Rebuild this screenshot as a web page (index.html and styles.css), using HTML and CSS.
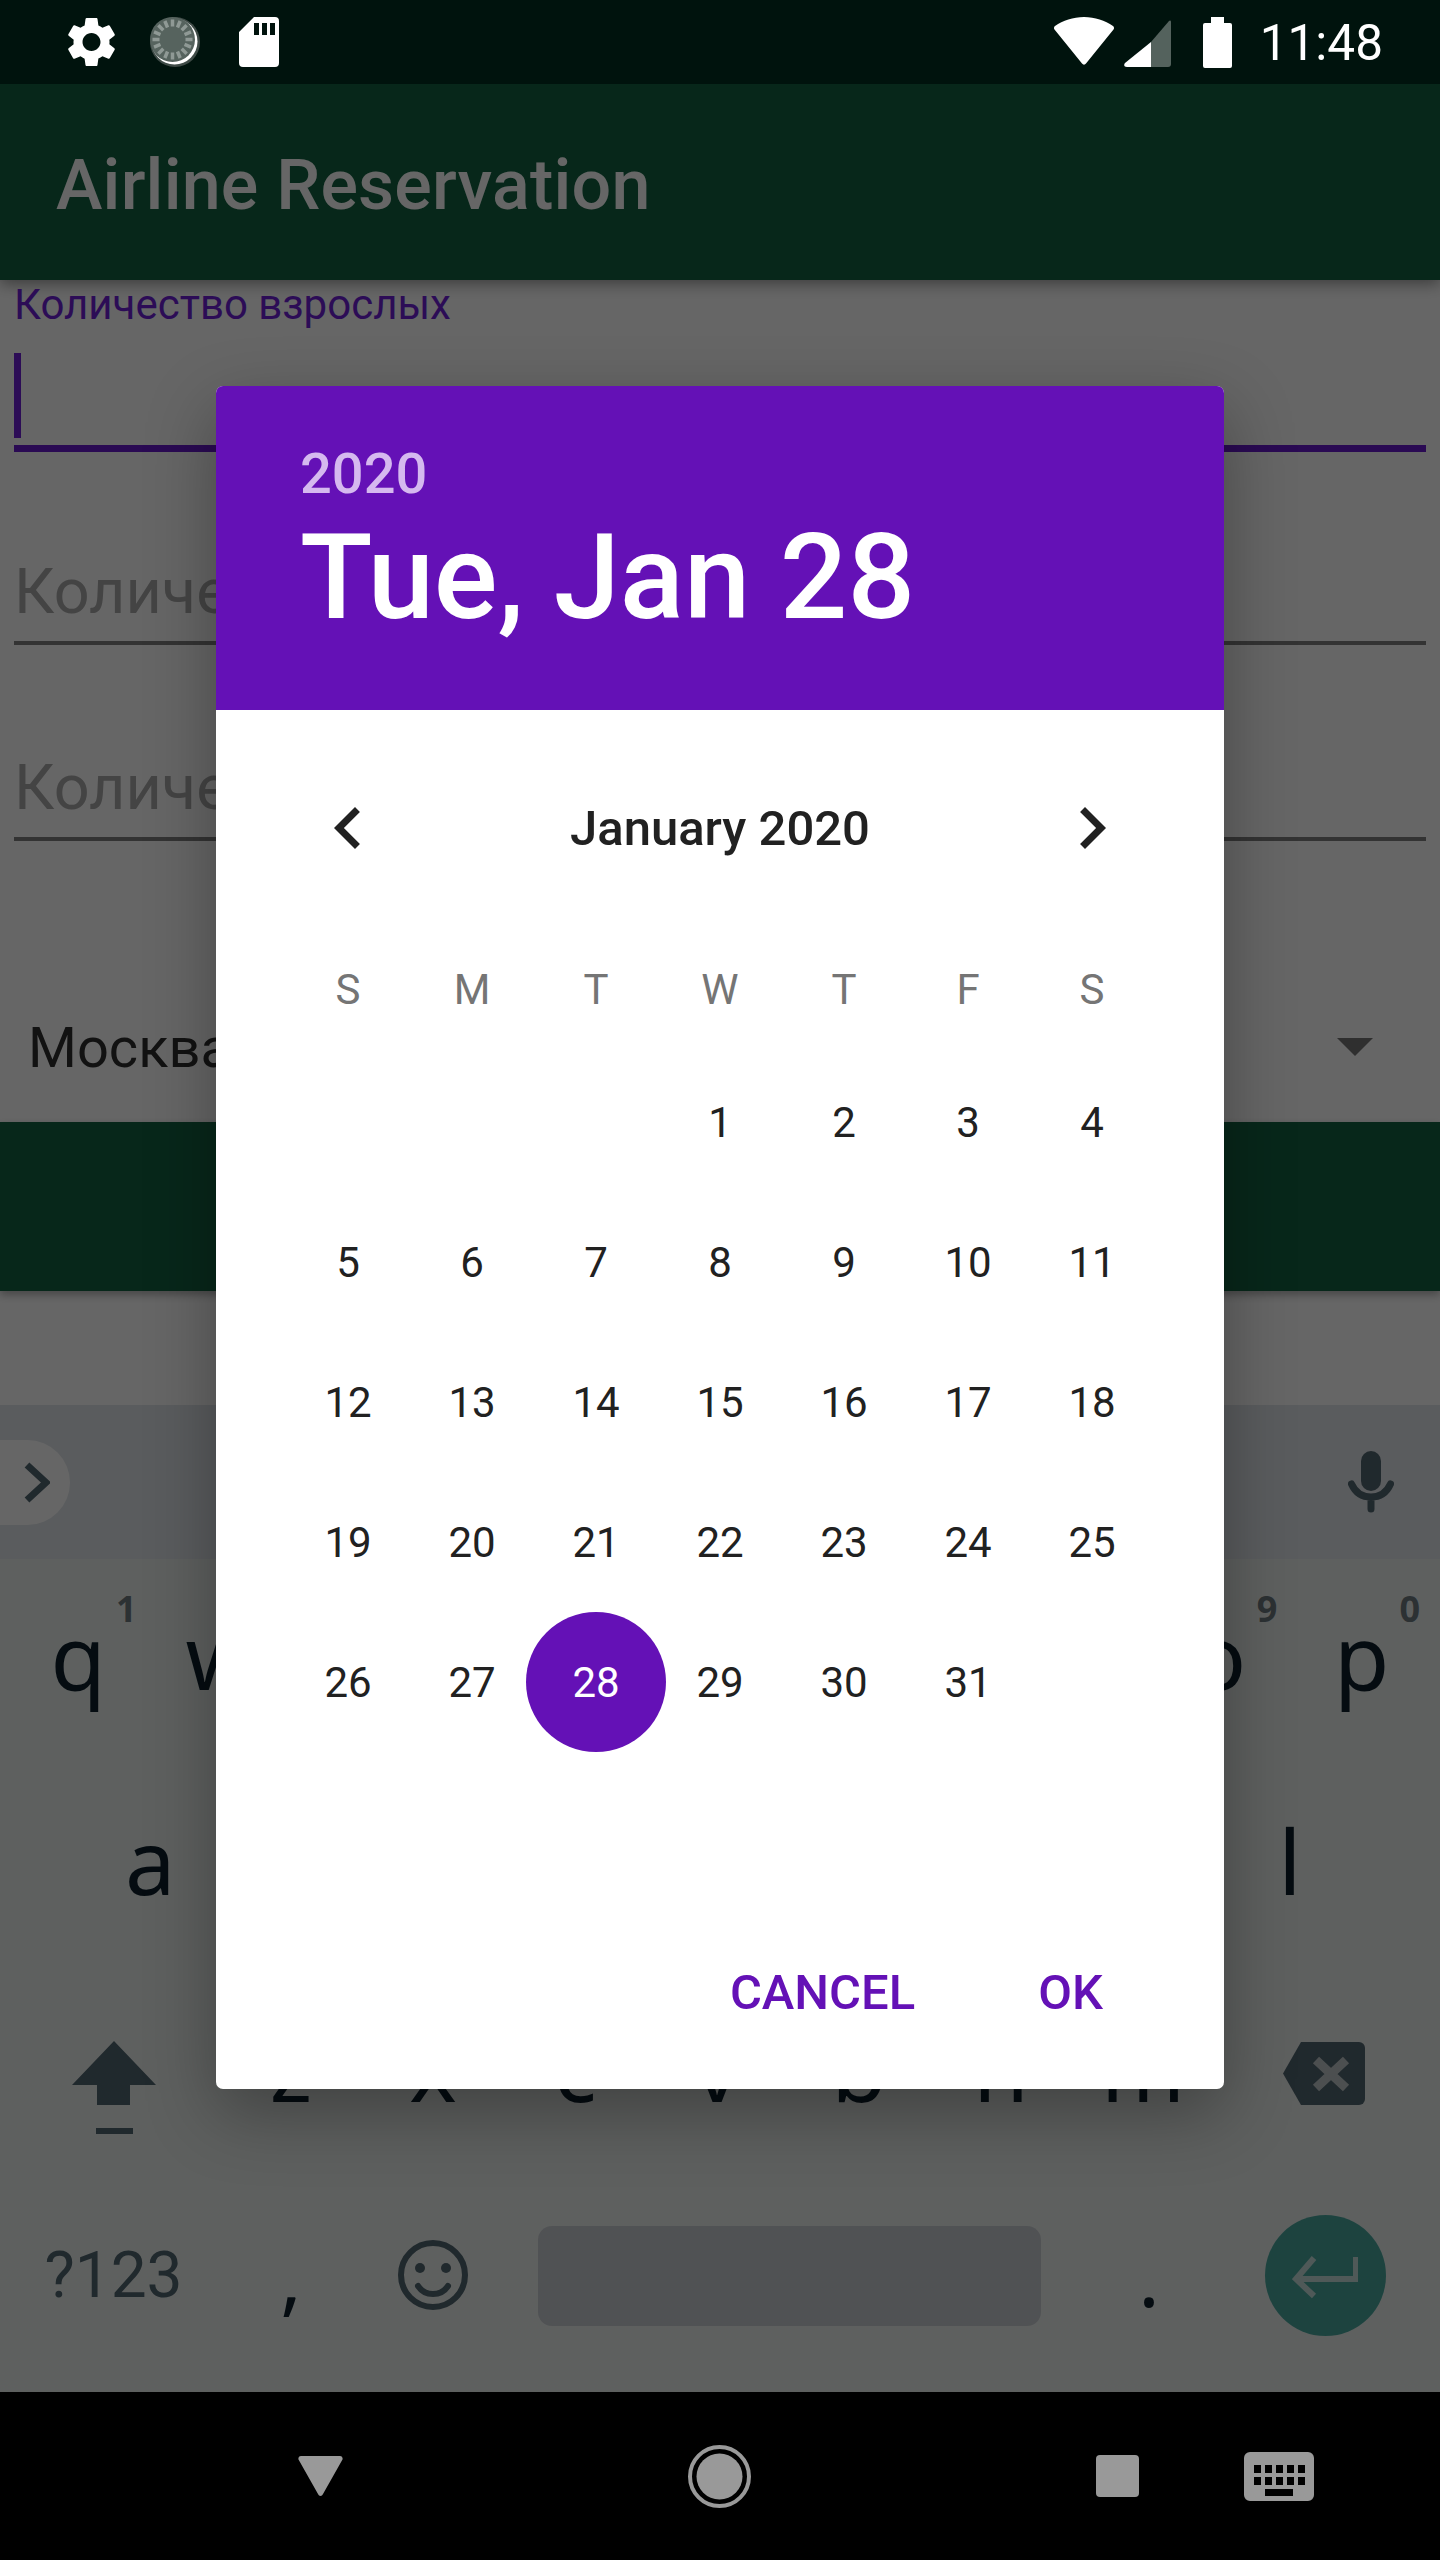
FILE: index.html
```html
<!DOCTYPE html>
<html lang="en">
<head>
    <meta charset="UTF-8">
    <meta name="viewport" content="width=device-width, initial-scale=1.0">
    <title>Airline Reservation</title>
    <link rel="stylesheet" href="styles.css">
</head>
<body>
    <div class="status-bar">
        <svg class="st-gear" viewBox="2.4 2 19.2 20"><path d="M19.14 12.94c.04-.3.06-.61.06-.94 0-.32-.02-.64-.07-.94l2.03-1.58c.18-.14.23-.41.12-.61l-1.92-3.32c-.12-.22-.37-.29-.59-.22l-2.39.96c-.5-.38-1.03-.7-1.62-.94l-.36-2.54c-.04-.24-.24-.41-.48-.41h-3.84c-.24 0-.43.17-.47.41l-.36 2.54c-.59.24-1.13.57-1.62.94l-2.39-.96c-.22-.08-.47 0-.59.22L2.74 8.87c-.12.21-.08.47.12.61l2.03 1.58c-.05.3-.09.63-.09.94s.02.64.07.94l-2.03 1.58c-.18.14-.23.41-.12.61l1.92 3.32c.12.22.37.29.59.22l2.39-.96c.5.38 1.03.7 1.62.94l.36 2.54c.05.24.24.41.48.41h3.84c.24 0 .44-.17.47-.41l.36-2.54c.59-.24 1.13-.56 1.62-.94l2.39.96c.22.08.47 0 .59-.22l1.92-3.32c.12-.22.07-.47-.12-.61l-2.01-1.58zM12 15.6c-1.98 0-3.6-1.62-3.6-3.6s1.62-3.6 3.6-3.6 3.6 1.62 3.6 3.6-1.62 3.6-3.6 3.6z"/></svg>
        <svg class="st-loader" viewBox="0 0 50 50">
            <circle class="loader-base" cx="25" cy="25" r="25"/>
            <circle class="loader-edge" cx="24.500" cy="24.500" r="23"/>
            <circle class="loader-face" cx="22.500" cy="22.500" r="22.500"/>
            <g transform="translate(22.500 22.500)">
                <path class="loader-ticks" d="M0-20V-13M0 13V20M-20 0H-13M13 0H20M7.65-18.48L4.98-12.01M-7.65-18.48L-4.98-12.01M7.65 18.48L4.98 12.01M-7.65 18.48L-4.98 12.01M14.14-14.14L9.19-9.19M-14.14-14.14L-9.19-9.19M14.14 14.14L9.19 9.19M-14.14 14.14L-9.19 9.19M18.48-7.65L12.01-4.98M-18.48-7.65L-12.01-4.98M18.48 7.65L12.01 4.98M-18.48 7.65L-12.01 4.98"/>
            </g>
        </svg>
        <svg class="st-sd" viewBox="0 0 40 50"><path d="M15 0h21a4 4 0 0 1 4 4v42a4 4 0 0 1-4 4H4a4 4 0 0 1-4-4V15zM15 6v12h5V6zM23 6v12h5V6zM31 6v12h5V6z" fill-rule="evenodd"/></svg>
        <div class="st-spacer"></div>
        <svg class="st-wifi" viewBox="0 0 60 48"><path d="M30 0c11 0 21 3.500 29 9 1 .8 1.300 2 .7 3.200L32 46.500c-1 1.500-3 1.500-4 0L.3 12.200C-.3 11 0 9.800 1 9 9 3.500 19 0 30 0z"/></svg>
        <svg class="st-signal" viewBox="0 0 47 47">
            <path class="signal-off" d="M27 22L45 1c1-1 2-.5 2 1v42c0 2-1 3-3 3H27z"/>
            <path d="M27 22v25H3c-3 0-3.500-2-2-4z"/>
        </svg>
        <svg class="st-battery" viewBox="0 0 29 51"><path d="M8 0h13v6h6a2 2 0 0 1 2 2v41a2 2 0 0 1-2 2H2a2 2 0 0 1-2-2V8a2 2 0 0 1 2-2h6z"/></svg>
        <span class="st-time">11:48</span>
    </div>

    <div class="app-bar">Airline Reservation</div>

    <div class="form">
        <div class="field field-active">
            <label class="field-label">Количество взрослых</label>
            <div class="cursor"></div>
        </div>
        <div class="field"><span class="field-hint">Количество детей</span></div>
        <div class="field"><span class="field-hint">Количество младенцев</span></div>
        <div class="spinner">
            <span class="spinner-text">Москва</span>
            <span class="spinner-arrow"></span>
        </div>
        <div class="search-btn"></div>
    </div>

    <div class="keyboard">
        <div class="kb-strip">
            <div class="kb-pill">
                <svg class="pill-chevron" viewBox="0 0 26 41"><path d="M3 3l19 17.500L3 38"/></svg>
            </div>
            <svg class="kb-mic" viewBox="0 0 46 62">
                <rect x="13" y="0" width="20" height="40" rx="10"/>
                <path class="mic-arc" d="M3.500 33c4 9 11 13 19.500 13s15.500-4 19.500-13M23 46v12"/>
            </svg>
        </div>
        <div class="kb-row kb-row-top">
            <span class="key">q<b class="key-hint">1</b></span>
            <span class="key">w<b class="key-hint">2</b></span>
            <span class="key">e<b class="key-hint">3</b></span>
            <span class="key">r<b class="key-hint">4</b></span>
            <span class="key">t<b class="key-hint">5</b></span>
            <span class="key">y<b class="key-hint">6</b></span>
            <span class="key">u<b class="key-hint">7</b></span>
            <span class="key">i<b class="key-hint">8</b></span>
            <span class="key">o<b class="key-hint">9</b></span>
            <span class="key">p<b class="key-hint">0</b></span>
        </div>
        <div class="kb-row kb-row-mid">
            <span class="key">a</span><span class="key">s</span><span class="key">d</span>
            <span class="key">f</span><span class="key">g</span><span class="key">h</span>
            <span class="key">j</span><span class="key">k</span><span class="key">l</span>
        </div>
        <div class="kb-row kb-row-low">
            <span class="key">
                <svg class="kb-shift" viewBox="0 0 84 93"><path d="M42 0l42 44H58v20H25V44H0z"/><rect x="24" y="87" width="37" height="6"/></svg>
            </span>
            <span class="key">z</span><span class="key">x</span><span class="key">c</span>
            <span class="key">v</span><span class="key">b</span><span class="key">n</span><span class="key">m</span>
            <span class="key">
                <svg class="kb-back" viewBox="0 0 82 63">
                    <path d="M18 0h58a6 6 0 0 1 6 6v51a6 6 0 0 1-6 6H18L0 31.500z"/>
                    <path class="back-x" d="M33 18l30 28M63 18L33 46"/>
                </svg>
            </span>
        </div>
        <div class="kb-row kb-row-bottom">
            <span class="key key-sym">?123</span>
            <span class="key key-punct key-comma">,</span>
            <span class="key">
                <svg class="kb-emoji" viewBox="0 0 70 70">
                    <circle class="emoji-face" cx="35" cy="35" r="32"/>
                    <circle cx="22" cy="28" r="5"/><circle cx="48" cy="28" r="5"/>
                    <path class="emoji-smile" d="M20 46c4 6 9 8 15 8s11-2 15-8"/>
                </svg>
            </span>
            <span class="kb-space"></span>
            <span class="key key-punct">.</span>
            <span class="key">
                <span class="kb-enter">
                    <svg viewBox="0 0 66 42"><path d="M64 2v22H5M22 3L4 24l18 17"/></svg>
                </span>
            </span>
        </div>
    </div>

    <div class="nav-bar">
        <svg class="nav-back" viewBox="0 0 45 40"><path d="M3 0h39c2 0 3 2 2.500 3.500L25 38c-1 2.500-4 2.500-5 0L.5 3.500C0 2 1 0 3 0z"/></svg>
        <svg class="nav-home" viewBox="0 0 63 63">
            <circle class="home-ring" cx="31.500" cy="31.500" r="29.500"/>
            <circle cx="31.500" cy="31.500" r="23"/>
        </svg>
        <div class="nav-recent"></div>
        <svg class="nav-kbd" viewBox="0 0 70 49">
            <path fill-rule="evenodd" d="M6 0h58a6 6 0 0 1 6 6v37a6 6 0 0 1-6 6H6a6 6 0 0 1-6-6V6a6 6 0 0 1 6-6zM10 13v8h7v-8zM21 13v8h7v-8zM32 13v8h7v-8zM43 13v8h7v-8zM54 13v8h7v-8zM10 25v8h7v-8zM21 25v8h7v-8zM32 25v8h7v-8zM43 25v8h7v-8zM54 25v8h7v-8zM21 37v7h28v-7z"/>
        </svg>
    </div>

    <div class="scrim">
        <div class="dialog">
            <div class="dialog-header">
                <div class="header-year">2020</div>
                <div class="header-date">Tue, Jan 28</div>
            </div>
            <div class="month-row">
                <svg class="chevron" viewBox="0 0 24 24"><path d="M15.410 7.410L14 6l-6 6 6 6 1.410-1.410L10.830 12z"/></svg>
                <span class="month-name">January 2020</span>
                <svg class="chevron" viewBox="0 0 24 24"><path d="M10 6L8.590 7.410 13.170 12l-4.580 4.590L10 18l6-6z"/></svg>
            </div>
            <div class="week-row">
                <span>S</span><span>M</span><span>T</span><span>W</span><span>T</span><span>F</span><span>S</span>
            </div>
            <div class="days">
                <span></span><span></span><span></span><span>1</span><span>2</span><span>3</span><span>4</span>
                <span>5</span><span>6</span><span>7</span><span>8</span><span>9</span><span>10</span><span>11</span>
                <span>12</span><span>13</span><span>14</span><span>15</span><span>16</span><span>17</span><span>18</span>
                <span>19</span><span>20</span><span>21</span><span>22</span><span>23</span><span>24</span><span>25</span>
                <span>26</span><span>27</span><span class="day-selected">28</span><span>29</span><span>30</span><span>31</span><span></span>
            </div>
            <div class="dialog-actions">
                <span class="action">CANCEL</span>
                <span class="action">OK</span>
            </div>
        </div>
    </div>
</body>
</html>
```

FILE: styles.css
```css
* { margin: 0; padding: 0; box-sizing: border-box; }
body {
    position: relative; width: 1440px; height: 2560px; overflow: hidden;
    display: flex; flex-direction: column;
    font-family: Roboto, "Liberation Sans", sans-serif; background: #fff;
}
svg { display: block; fill: currentColor; }

/* status bar sits above the scrim */
.status-bar {
    position: relative; z-index: 2; flex: none; height: 84px;
    display: flex; align-items: center; padding: 0 57px 0 67px;
    background: #00130d; color: #fff;
}
.st-gear { width: 49px; height: 50px; margin-right: 34px; }
.st-loader { width: 50px; height: 50px; margin-right: 39px; }
.loader-base { fill: #3f4b47; }
.loader-edge { fill: #fff; }
.loader-face { fill: #56635e; }
.loader-ticks { fill: none; stroke: #8f9995; stroke-width: 3.5; }
.st-sd { width: 40px; height: 50px; }
.st-spacer { flex: 1; }
.st-wifi { width: 60px; height: 48px; margin-right: 10px; margin-top: -2px; }
.st-signal { width: 47px; height: 47px; margin-right: 32px; margin-top: 3px; }
.signal-off { fill: #54625d; }
.st-battery { width: 29px; height: 51px; margin-right: 28px; }
.st-time { font-size: 49.5px; line-height: 1; margin-top: 4px; white-space: nowrap; }

.app-bar {
    flex: none; height: 196px; padding: 6px 56px 0;
    display: flex; align-items: center;
    background: #126141; color: #fff; font-size: 70px; font-weight: 500; letter-spacing: 0.2px;
    box-shadow: 0 4px 14px rgba(0,0,0,0.4); position: relative;
}

.form { flex: none; height: 1125px; display: flex; flex-direction: column; }
.field {
    height: 196px; margin: 0 14px; padding-top: 110px;
    border-bottom: 4px solid #808080;
}
.field-active {
    position: relative; height: 172px; padding-top: 0; margin-bottom: -3px;
    border-bottom: 7px solid #6a1bd0;
}
.field-label { display: block; font-size: 42px; line-height: 50px; color: #6e1fd8; }
.cursor { width: 7px; height: 85px; margin-top: 23px; background: #6e1fd8; }
.field-hint { font-size: 63px; line-height: 66px; color: #aaa; }

.spinner {
    height: 281px; padding: 133px 67px 0 28px;
    display: flex; align-items: center; justify-content: space-between;
}
.spinner-text { font-size: 56px; color: #2e2e2e; }
.spinner-arrow {
    width: 0; height: 0; margin-bottom: 2px;
    border-left: 18px solid transparent; border-right: 18px solid transparent;
    border-top: 18px solid #757575;
}
.search-btn { height: 169px; background: #126141; box-shadow: 0 4px 8px rgba(0,0,0,0.3); }

.keyboard { flex: 1; display: flex; flex-direction: column; background: #ebf0ee; color: #0d1f2b; }
.kb-strip {
    height: 154px; padding: 0 46px 0 0;
    display: flex; align-items: center; justify-content: space-between;
    background: #e1e6eb;
}
.kb-pill {
    width: 70px; height: 85px; display: flex; align-items: center; justify-content: flex-end;
    padding-right: 20px; border-radius: 0 43px 43px 0; background: #fff;
}
.pill-chevron { width: 26px; height: 41px; fill: none; stroke: #526670; stroke-width: 7; }
.kb-mic { width: 46px; height: 62px; color: #526670; }
.mic-arc { fill: none; stroke: #526670; stroke-width: 7; stroke-linecap: round; }

.kb-row { display: grid; height: 208px; padding: 0 7px; }
.kb-row-top { grid-template-columns: repeat(10, 1fr); padding-bottom: 16px; }
.kb-row-mid { grid-template-columns: repeat(9, 1fr); padding: 0 79px 22px; }
.kb-row-low { grid-template-columns: 213px repeat(7, 1fr) 219px; padding-bottom: 24px; }
.kb-row-bottom { flex: 1; grid-template-columns: 213px 134px 157px 570px 136px 1fr; padding-bottom: 24px; }
.key {
    position: relative; display: flex; align-items: center; justify-content: center;
    font-family: "Noto Sans", sans-serif; font-size: 90px;
}
.key-hint { position: absolute; top: 25px; right: 13px; font-size: 36px; font-weight: 700; color: #6e7a80; }
.key-sym { font-family: Roboto, sans-serif; font-size: 64px; color: #526670; }
.key-punct { font-size: 80px; }
.key-comma { padding-left: 8px; }
.kb-shift { width: 84px; height: 93px; color: #526670; margin-top: 41px; }
.kb-back { width: 82px; height: 63px; color: #526670; margin-top: 13px; }
.back-x { fill: none; stroke: #ebf0ee; stroke-width: 9; opacity: 0.7; }
.kb-emoji { width: 70px; height: 70px; color: #526670; margin-top: -2px; }
.emoji-face { fill: none; stroke: #526670; stroke-width: 6; }
.emoji-smile { fill: none; stroke: #526670; stroke-width: 6; stroke-linecap: round; }
.kb-space { align-self: center; height: 100px; margin: 0 40px 0 27px; border-radius: 14px; background: #c9cdd2; }
.kb-enter {
    width: 121px; height: 121px; border-radius: 50%;
    display: flex; align-items: center; justify-content: center; background: #4aa89f;
}
.kb-enter svg { width: 66px; height: 46px; fill: none; stroke: #eef2f0; stroke-width: 6; opacity: 0.75; }

.nav-bar {
    position: relative; z-index: 2; flex: none; height: 168px;
    display: flex; align-items: center; padding-left: 298px;
    background: #000; color: #999;
}
.nav-back { width: 45px; height: 40px; margin-right: 345px; }
.nav-home { width: 63px; height: 63px; margin-right: 345px; }
.home-ring { fill: none; stroke: #999; stroke-width: 4; }
.nav-recent { width: 43px; height: 42px; margin-right: 105px; border-radius: 4px; background: #999; }
.nav-kbd { width: 70px; height: 49px; }

/* dim layer and date picker */
.scrim {
    position: absolute; inset: 0; z-index: 1; padding: 84px 0 169px;
    display: flex; align-items: center; justify-content: center;
    background: rgba(0,0,0,0.6);
}
.dialog {
    width: 1008px; height: 1703px; overflow: hidden; border-radius: 7px;
    background: #fff; box-shadow: 0 24px 70px rgba(0,0,0,0.32);
}
.dialog-header { height: 324px; padding: 52px 84px 0; background: #6411b6; color: #fff; }
.header-year { font-size: 56px; line-height: 72px; font-weight: 500; color: #d5b9ef; }
.header-date { font-size: 119px; line-height: 130px; margin-top: 3px; font-weight: 500; }
.month-row {
    height: 236px; padding: 0 90px;
    display: flex; align-items: center; justify-content: space-between;
}
.chevron { width: 84px; height: 84px; color: #212121; }
.month-name { font-size: 49px; font-weight: 500; color: #212121; }
.week-row, .days { display: grid; grid-template-columns: repeat(7, 124px); padding: 0 70px; text-align: center; font-size: 42px; }
.week-row { height: 88px; line-height: 88px; margin-bottom: 18px; color: #757575; }
.days { grid-auto-rows: 140px; height: 840px; color: #212121; }
.days span { display: flex; align-items: center; justify-content: center; }
.days .day-selected { width: 140px; height: 140px; margin-left: -8px; border-radius: 50%; background: #6411b6; color: #fff; }
.dialog-actions { display: flex; justify-content: flex-end; gap: 123px; padding: 0 121px 0 0; margin-top: 71px; }
.action { font-size: 49px; font-weight: 500; color: #6411b6; line-height: 60px; }
```
